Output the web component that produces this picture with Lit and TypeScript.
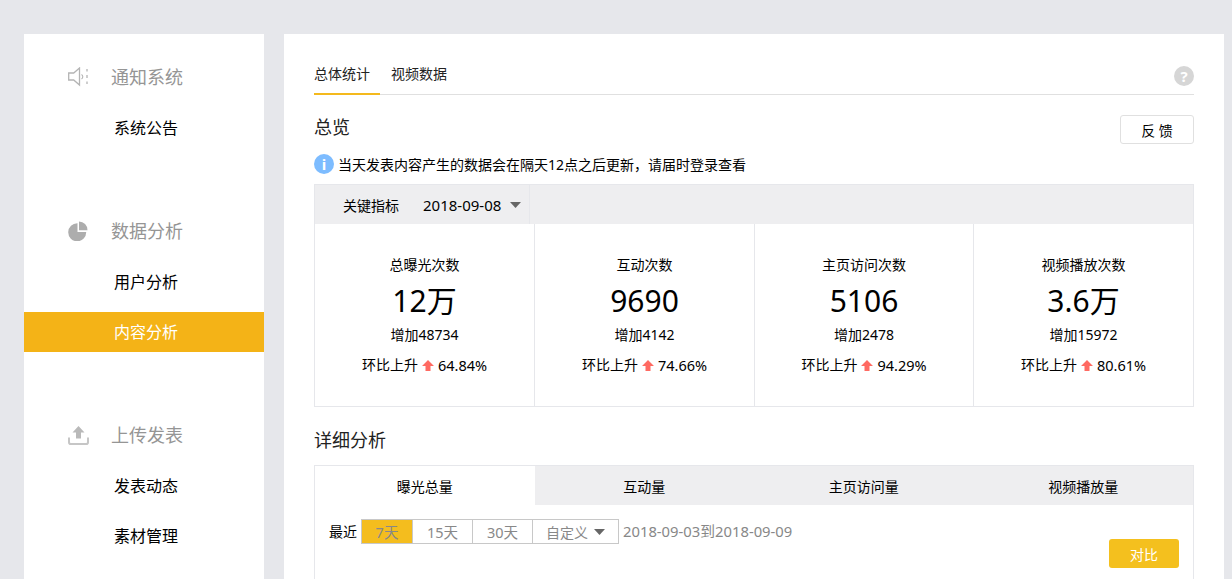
import { LitElement, html, css, svg } from "lit";
import { customElement } from "lit/decorators.js";

const caret = html`<svg class="caret" width="11" height="6" viewBox="0 0 11 6"><path d="M0 0h11L5.500 6z" fill="#666"/></svg>`;
const up = html`<svg class="up" width="12" height="11" viewBox="0 0 12 11"><path d="M6 0l6 6H8.500v5h-5V6H0z" fill="#ff6a62"/></svg>`;

const speaker = svg`<path d="M0.700 6h5L11.500 1v17L5.700 13h-5z" fill="none" stroke="#b4b4b4" stroke-width="1.300"/><path d="M13.500 7.500a2.600 2.600 0 0 1 0 4.500" fill="none" stroke="#b4b4b4" stroke-width="1.100"/><path d="M19 2v2.500M19 8v3M19 14.500v2.500" stroke="#b4b4b4" stroke-width="1.300"/>`;
const pie = svg`<path d="M9.500 2.300v8.700h8.700a9 9 0 1 1-8.700-8.700z" fill="#adadad"/><path d="M11 .5a8.500 8.500 0 0 1 8.500 8.700H11z" fill="#adadad"/>`;
const upload = svg`<path d="M10.500 1l6 6.500h-3.500v6h-5v-6H4.500z" fill="#b9b9b9"/><path d="M1 12.500v4.700a1.800 1.800 0 0 0 1.800 1.800h15.400a1.800 1.800 0 0 0 1.800-1.800v-4.700" fill="none" stroke="#c6c6c6" stroke-width="2"/>`;

const groups = [
  { icon: speaker, title: "通知系统", items: ["系统公告"] },
  { icon: pie, title: "数据分析", items: ["用户分析", "内容分析"] },
  { icon: upload, title: "上传发表", items: ["发表动态", "素材管理"] },
];
const stats = [
  { t: "总曝光次数", n: "12万", add: "增加48734", p: "64.84%" },
  { t: "互动次数", n: "9690", add: "增加4142", p: "74.66%" },
  { t: "主页访问次数", n: "5106", add: "增加2478", p: "94.29%" },
  { t: "视频播放次数", n: "3.6万", add: "增加15972", p: "80.61%" },
];

@customElement("app-root")
export class AppRoot extends LitElement {
  static styles = css`
    :host { display: block; height: 579px; overflow: hidden; background: #e6e7eb; color: #000;
      font-family: "Noto Sans", "Noto Sans CJK SC", sans-serif; font-size: 14px; }
    .page { display: flex; gap: 20px; padding: 34px 8px 0 24px; align-items: flex-start; }
    .side { width: 240px; height: 545px; background: #fff; padding-top: 18px; box-sizing: border-box; flex: none; }
    .group { margin-bottom: 54px; }
    .head { height: 50px; display: flex; align-items: center; padding: 0 0 2px 44px; box-sizing: border-box; font-size: 18px; color: #959595; }
    .head svg { width: 21px; height: 20px; margin: 1px 22px 0 0; flex: none; }
    .item { height: 50px; display: flex; align-items: center; padding-left: 90px; font-size: 16px; margin-top: 1px; margin-bottom: -1px; }
    .item span { display: block; width: 100%; margin-left: -90px; padding-left: 90px; height: 40px; line-height: 40px; }
    .item .on { background: #f4b317; color: #fff; }
    .main { flex: 1; height: 545px; background: #fff; padding: 0 30px; box-sizing: border-box; }
    .tabs { height: 61px; display: flex; align-items: flex-end; border-bottom: 1px solid #e0e0e0; position: relative; box-sizing: border-box; }
    .tab { height: 40px; line-height: 40px; margin-right: 11px; box-sizing: border-box; color: #222; font-size: 14px; }
    .tab.on { width: 66px; border-bottom: 2px solid #f4b91d; margin-bottom: -1px; height: 41px; }
    .help { margin-left: auto; width: 20px; height: 20px; border-radius: 50%; background: #d6d6d6; color: #fff; font-size: 15px; font-weight: 700;
      display: flex; align-items: center; justify-content: center; align-self: flex-start; margin-top: 32px; margin-right: 0; }
    .title-row { display: flex; justify-content: space-between; align-items: flex-start; margin-top: 20px; }
    h2 { margin: 0; font-size: 18px; font-weight: 400; line-height: 26px; color: #222; }
    .title-row h2 { margin-top: -1px; margin-bottom: 1px; }
    .fb { width: 74px; height: 29px; border: 1px solid #e0e0e0; border-radius: 3px; box-sizing: border-box; display: flex; align-items: center; justify-content: center; font-size: 14px; background: #fff; }
    .info { display: flex; align-items: center; gap: 4px; height: 20px; margin-top: 10px; font-size: 14px; }
    .dot { width: 20px; height: 20px; border-radius: 50%; background: #7dbcff; color: #fff; font-size: 15px; font-weight: 700; display: flex; align-items: center; justify-content: center; }
    .table { margin-top: 10px; border: 1px solid #e6e7eb; height: 223px; box-sizing: border-box; }
    .thead { height: 39px; background: #eeeef0; display: flex; }
    .key { width: 215px; border-right: 1px solid #e6e7eb; display: flex; align-items: center; padding-left: 28px; box-sizing: border-box; }
    .date { margin-left: 24px; font-size: 15px; margin-right: 9px; }
    .cells { display: grid; grid-template-columns: 219px 220px 219px 1fr; height: 182px; }
    .cell { border-left: 1px solid #e6e7eb; text-align: center; display: flex; flex-direction: column; align-items: center; padding-top: 31px; box-sizing: border-box; }
    .cell:first-child { border-left: 0; }
    .ct { font-size: 14px; height: 20px; line-height: 20px; }
    .num { font-size: 30px; height: 42px; line-height: 44px; margin-top: 4px; }
    .add { font-size: 14px; height: 20px; line-height: 20px; margin-top: 4px; }
    .rate { font-size: 14px; height: 20px; line-height: 20px; margin-top: 10px; display: flex; align-items: center; gap: 4px; }
    .pct { font-size: 14.500px; }
    .h-detail { margin-top: 20px; }
    .box { margin-top: 12px; border: 1px solid #e6e7eb; border-bottom: 0; height: 160px; box-sizing: border-box; }
    .dtabs { display: grid; grid-template-columns: repeat(4, 1fr); height: 39px; background: #eeeef0; }
    .dtabs div { display: flex; align-items: center; justify-content: center; font-size: 14px; }
    .dtabs .on { background: #fff; }
    .filter { display: flex; align-items: flex-start; padding: 14px 14px 0; }
    .lbl { line-height: 25px; margin-right: 4px; font-size: 14px; }
    .seg { display: flex; border: 1px solid #c8c8c8; height: 25px; box-sizing: border-box; color: #888; }
    .seg div { display: flex; align-items: center; justify-content: center; border-left: 1px solid #c8c8c8; box-sizing: border-box; gap: 6px; font-size: 14.500px; }
    .seg div:first-child { border-left: 0; background: #f4bd1e; width: 50px; }
    .seg .m { width: 60px; }
    .seg .c { width: 86px; font-size: 14px; }
    .range { color: #888; margin-left: 4px; line-height: 25px; font-size: 14.800px; }
    .cmp { margin-left: auto; margin-top: 20px; width: 70px; height: 29px; border-radius: 3px; background: #f4c01e; color: #fff; display: flex; align-items: center; justify-content: center; font-size: 14px; }
  `;

  render() {
    return html`<div class="page">
      <nav class="side">
        ${groups.map((g) => html`<div class="group">
          <div class="head"><svg viewBox="0 0 21 20">${g.icon}</svg>${g.title}</div>
          ${g.items.map((i) => html`<div class="item"><span class=${i === "内容分析" ? "on" : ""}>${i}</span></div>`)}
        </div>`)}
      </nav>
      <main class="main">
        <div class="tabs">
          <div class="tab on">总体统计</div><div class="tab">视频数据</div>
          <div class="help">?</div>
        </div>
        <div class="title-row"><h2>总览</h2><div class="fb">反 馈</div></div>
        <div class="info"><span class="dot">i</span>当天发表内容产生的数据会在隔天12点之后更新，请届时登录查看</div>
        <section class="table">
          <div class="thead"><div class="key">关键指标<span class="date">2018-09-08</span>${caret}</div></div>
          <div class="cells">
            ${stats.map((s) => html`<div class="cell">
              <div class="ct">${s.t}</div>
              <div class="num">${s.n}</div>
              <div class="add">${s.add}</div>
              <div class="rate">环比上升 ${up} <span class="pct">${s.p}</span></div>
            </div>`)}
          </div>
        </section>
        <h2 class="h-detail">详细分析</h2>
        <section class="box">
          <div class="dtabs"><div class="on">曝光总量</div><div>互动量</div><div>主页访问量</div><div>视频播放量</div></div>
          <div class="filter">
            <span class="lbl">最近</span>
            <div class="seg"><div>7天</div><div class="m">15天</div><div class="m">30天</div><div class="c">自定义 ${caret}</div></div>
            <span class="range">2018-09-03到2018-09-09</span>
            <div class="cmp">对比</div>
          </div>
        </section>
      </main>
    </div>`;
  }
}
